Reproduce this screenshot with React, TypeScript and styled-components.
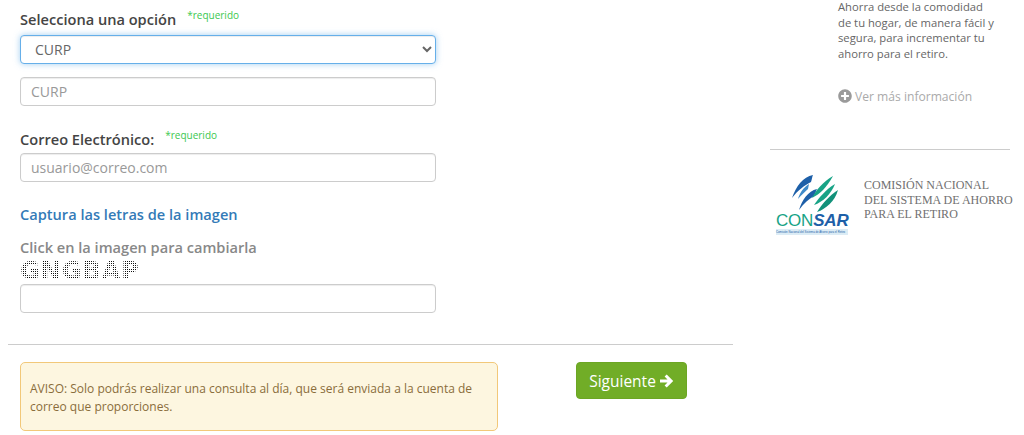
import styled, { createGlobalStyle } from "styled-components"
import { FaPlusCircle } from "react-icons/fa"

const GlobalStyle = createGlobalStyle`
  html, body {
    margin: 0;
    padding: 0;
    background: #fff;
    font-family: "Open Sans", "Liberation Sans", sans-serif;
  }
  * {
    box-sizing: border-box;
  }
`

const ConsarLogo = () => (
  <LogoBox>
    <svg width="72" height="38" viewBox="0 0 72 38">
      <path d="M37 1 C27 3 20 12 16 24 C22 16 29 11 35 8 C36 5 36 3 37 1 Z" fill="#1d5fa8" />
      <path d="M33 10 C28 13 24 18 22 25 C25 21 29 18 32 15 Z" fill="#3f8ac9" />
      <path d="M41 15 C32 17 26 26 23 36 C28 29 33 25 38 22 Z" fill="#1d5fa8" />
      <path d="M57 2 C47 8 40 16 36 24 C44 20 51 13 57 2 Z" fill="#18a386" />
      <path d="M59 10 C49 16 43 24 38 31 C47 28 55 20 59 10 Z" fill="#18a386" />
      <path d="M62 16 C53 22 46 30 41 38 C50 35 59 27 62 16 Z" fill="#12917a" />
    </svg>
    <LogoWord>
      CON<b>SAR</b>
    </LogoWord>
    <LogoTagline>Comisión Nacional del Sistema de Ahorro para el Retiro</LogoTagline>
  </LogoBox>
)

const ArrowIcon = () => (
  <svg width="14" height="14" viewBox="0 0 14 14">
    <path d="M0 5.5h7.5L4.6 2.6 6.7.5 13.2 7l-6.5 6.5-2.1-2.1 2.9-2.9H0z" fill="#fff" />
  </svg>
)

export default function App() {
  return (
    <Page>
      <GlobalStyle />
      <MainCol>
        <Form>
          <LabelRow>
            <FieldLabel>Selecciona una opción</FieldLabel>
            <Required>*requerido</Required>
          </LabelRow>
          <Select defaultValue="CURP">
            <option>CURP</option>
            <option>NSS</option>
          </Select>
          <Input placeholder="CURP" $top={13} />
          <LabelRow $top={24} $height={23}>
            <FieldLabel>Correo Electrónico:</FieldLabel>
            <Required>*requerido</Required>
          </LabelRow>
          <Input placeholder="usuario@correo.com" />
          <CaptureTitle>Captura las letras de la imagen</CaptureTitle>
          <Hint>Click en la imagen para cambiarla</Hint>
          <Captcha>GNGBAP</Captcha>
          <Input />
        </Form>
        <Rule />
        <Footer>
          <Notice>
            AVISO: Solo podrás realizar una consulta al día, que será enviada a la cuenta de correo
            que proporciones.
          </Notice>
          <NextButton>
            Siguiente <ArrowIcon />
          </NextButton>
        </Footer>
      </MainCol>
      <SideCol>
        <SideText>
          Ahorra desde la comodidad
          <br />
          de tu hogar, de manera fácil y
          <br />
          segura, para incrementar tu
          <br />
          ahorro para el retiro.
        </SideText>
        <MoreLink>
          <FaPlusCircle size={14} color="#9a9a9a" />
          Ver más información
        </MoreLink>
        <SideRule />
        <Brand>
          <ConsarLogo />
          <BrandName>
            COMISIÓN NACIONAL
            <br />
            DEL SISTEMA DE AHORRO
            <br />
            PARA EL RETIRO
          </BrandName>
        </Brand>
      </SideCol>
    </Page>
  )
}

const Page = styled.div`
  display: flex;
  width: 1024px;
  height: 435px;
  overflow: hidden;
  padding-left: 8px;
`

const MainCol = styled.div`
  width: 725px;
  display: flex;
  flex-direction: column;
`

const Form = styled.div`
  width: 416px;
  margin: 10px 0 0 12px;
  display: flex;
  flex-direction: column;
`

const LabelRow = styled.div<{ $top?: number; $height?: number }>`
  display: flex;
  align-items: flex-start;
  height: ${(p) => p.$height ?? 25}px;
  margin-top: ${(p) => p.$top ?? 0}px;
`

const FieldLabel = styled.label`
  font-size: 14.6px;
  line-height: 19px;
  font-weight: 600;
  color: #444;
`

const Required = styled.span`
  margin: -1px 0 0 11px;
  font-size: 10px;
  line-height: 12px;
  color: #3cc84f;
`

const Select = styled.select`
  width: 100%;
  height: 29px;
  padding: 0 10px;
  font: 14px "Open Sans", sans-serif;
  color: #666;
  background: #fff;
  border: 1px solid #66afe9;
  border-radius: 4px;
  outline: none;
  box-shadow: inset 0 1px 1px rgba(0, 0, 0, 0.075), 0 0 6px rgba(102, 175, 233, 0.6);
`

const Input = styled.input<{ $top?: number }>`
  width: 100%;
  height: 29px;
  margin-top: ${(p) => p.$top ?? 0}px;
  padding: 0 10px;
  font: 14px "Open Sans", sans-serif;
  color: #555;
  background: #fff;
  border: 1px solid #ccc;
  border-radius: 4px;
  outline: none;
  box-shadow: inset 0 1px 1px rgba(0, 0, 0, 0.075);
  &::placeholder {
    color: #999;
    opacity: 1;
  }
`

const CaptureTitle = styled.div`
  margin-top: 23px;
  font-size: 14.6px;
  line-height: 19px;
  font-weight: 600;
  color: #337ab7;
`

const Hint = styled.div`
  margin-top: 14px;
  font-size: 14.6px;
  line-height: 19px;
  font-weight: 600;
  color: #888;
`

/* dotted captcha letters: one dark pixel in each 2x2 cell, clipped to the text */
const Captcha = styled.div`
  width: 125px;
  height: 27px;
  padding-top: 1px;
  font-family: "DejaVu Sans", sans-serif;
  font-size: 24px;
  font-weight: 700;
  line-height: 26px;
  letter-spacing: 1px;
  white-space: nowrap;
  background-image: conic-gradient(#111 25%, transparent 0);
  background-size: 2px 2px;
  -webkit-background-clip: text;
  background-clip: text;
  color: transparent;
`

const Rule = styled.hr`
  width: 100%;
  height: 1px;
  margin: 31px 0 0;
  border: 0;
  background: #ccc;
`

const Footer = styled.div`
  display: flex;
  align-items: flex-start;
  margin: 17px 0 0 12px;
`

const Notice = styled.div`
  width: 478px;
  height: 69px;
  padding: 17px 12px 0 9px;
  font-size: 12px;
  line-height: 18px;
  color: #8a6d3b;
  background: #fdf6e0;
  border: 1px solid #f2c879;
  border-radius: 5px;
`

const NextButton = styled.button`
  width: 111px;
  height: 37px;
  margin-left: 78px;
  display: flex;
  align-items: center;
  justify-content: center;
  gap: 4px;
  font: 15.5px "Open Sans", sans-serif;
  color: #fff;
  background: #71ad27;
  border: 1px solid #6ca624;
  border-radius: 4px;
`

const SideCol = styled.div`
  width: 240px;
  margin-left: 37px;
  display: flex;
  flex-direction: column;
`

const SideText = styled.div`
  margin-left: 68px;
  margin-top: -1px;
  font-size: 11.25px;
  line-height: 15.5px;
  color: #666;
`

const MoreLink = styled.div`
  display: flex;
  align-items: center;
  gap: 3px;
  margin: 27px 0 0 68px;
  height: 16px;
  font-size: 12.1px;
  color: #aaa;
`

const SideRule = styled.hr`
  width: 100%;
  height: 1px;
  margin: 45px 0 0;
  border: 0;
  background: #ccc;
`

const Brand = styled.div`
  display: flex;
  align-items: flex-start;
  margin-top: 24px;
  margin-left: 5px;
`

const LogoBox = styled.div`
  width: 75px;
  margin-right: 14px;
  padding-left: 1px;
  display: flex;
  flex-direction: column;
  align-items: flex-start;
  flex-shrink: 0;
`

const LogoWord = styled.div`
  margin-top: 1px;
  font-family: "Liberation Sans", sans-serif;
  font-size: 17px;
  line-height: 16px;
  letter-spacing: -0.2px;
  color: #18a386;
  b {
    color: #1d5fa8;
    font-style: italic;
  }
`

const LogoTagline = styled.div`
  width: 72px;
  height: 6px;
  font-family: "Liberation Sans", sans-serif;
  font-size: 2.8px;
  line-height: 6px;
  white-space: nowrap;
  color: #1d5fa8;
  background: #dcecf5;
`

const BrandName = styled.div`
  margin-top: 4px;
  font-family: "Liberation Serif", serif;
  font-size: 12px;
  line-height: 14.5px;
  white-space: nowrap;
  color: #707070;
`
